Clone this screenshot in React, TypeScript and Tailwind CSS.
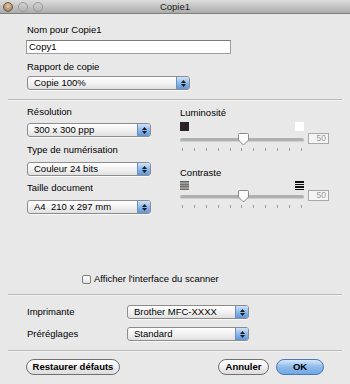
import React from 'react';

const font = { fontFamily: '"Liberation Sans", Arial, sans-serif' };

function Select({ value, width }: { value: string; width: string }) {
  return (
    <div className={`${width} h-[14px] flex items-stretch rounded-[3px] border border-[#8c8c8c] bg-gradient-to-b from-[#ffffff] via-[#f2f2f2] to-[#e0e0e0] shadow-[0_1px_0_#f8f8f8] overflow-hidden`}>
      <div className="flex-1 pl-[6px] text-[9.5px] leading-[12px] text-black whitespace-pre">{value}</div>
      <div className="w-[13px] flex flex-col items-center justify-center gap-[1px] border-l border-[#6d8fbd] bg-gradient-to-b from-[#cfe3fa] via-[#8fb9ec] to-[#5d95da]">
        <svg width="5" height="3" viewBox="0 0 5 3"><path d="M0 3 L2.5 0 L5 3 Z" fill="#1a1a1a" /></svg>
        <svg width="5" height="3" viewBox="0 0 5 3"><path d="M0 0 L2.5 3 L5 0 Z" fill="#1a1a1a" /></svg>
      </div>
    </div>
  );
}

function Slider() {
  return (
    <div className="flex items-center gap-[4px]">
      <div className="relative w-[124px] h-[18px] shrink-0">
        <div className="absolute left-0 right-0 top-[5px] h-[4px] rounded-full bg-[#b0b0b0] border-b border-[#cfcfcf]" />
        <svg className="absolute left-[57px] top-0" width="13" height="13" viewBox="0 0 13 13">
          <path d="M1.5 1.5 Q1.5 0.5 2.5 0.5 L10.5 0.5 Q11.5 0.5 11.5 1.5 L11.5 7 L6.5 12 L1.5 7 Z" fill="#fbfbfb" stroke="#8a8a8a" strokeWidth="1" />
        </svg>
        <div className="absolute left-0 right-0 top-[15px] flex justify-between px-[2px]">
          {[0, 1, 2, 3, 4, 5, 6, 7, 8, 9, 10].map((i) => (
            <div key={i} className="w-px h-[3px] bg-[#9a9a9a]" />
          ))}
        </div>
      </div>
      <div className="w-[21px] h-[11px] mb-[7px] shrink-0 border border-[#a8a8a8] bg-[#f4f4f4] text-right pr-[2px] text-[8.5px] leading-[9px] text-[#9a9a9a]">50</div>
    </div>
  );
}

function Button({ label, width, primary }: { label: string; width: string; primary?: boolean }) {
  return (
    <div
      className={`${width} h-[16px] rounded-full border flex items-center justify-center text-[9.5px] font-bold ${
        primary
          ? 'border-[#4a78b4] bg-gradient-to-b from-[#d6e8fb] via-[#8ebae9] to-[#6ea7e6] text-black'
          : 'border-[#707070] bg-gradient-to-b from-[#ffffff] via-[#f0f0f0] to-[#dcdcdc] text-black'
      }`}
    >
      {label}
    </div>
  );
}

export default function App() {
  return (
    <div className="w-[350px] h-[384px] bg-[#e8e8e8] overflow-hidden text-black" style={font}>
      {/* Title bar */}
      <div className="h-[14px] relative flex items-center justify-center bg-gradient-to-b from-[#dcdcdc] to-[#ababab] border-b border-[#7d7d7d]">
        <div className="absolute left-[3px] top-[2px] flex gap-[5px]">
          <div className="w-[10px] h-[10px] rounded-full bg-[radial-gradient(circle_at_50%_35%,#e6c9a8,#8d6b4d)] border border-[#6f5a48]" />
          <div className="w-[10px] h-[10px] rounded-full bg-gradient-to-b from-[#cfcfcf] to-[#b5b5b5] border border-[#9a9a9a]" />
          <div className="w-[10px] h-[10px] rounded-full bg-gradient-to-b from-[#cfcfcf] to-[#b5b5b5] border border-[#9a9a9a]" />
        </div>
        <span className="text-[9.5px] leading-[12px] text-[#222]">Copie1</span>
      </div>

      {/* Top block */}
      <div className="px-[27px]">
        <div className="mt-[10px] text-[9.5px] leading-[12px]">Nom pour Copie1</div>
        <div className="mt-[4px] w-[205px] h-[14px] -ml-[1px] border border-[#9d9d9d] border-t-[#7a7a7a] bg-white pl-[2px] text-[9.5px] leading-[12px]">Copy1</div>
        <div className="mt-[7px] text-[9.5px] leading-[12px]">Rapport de copie</div>
        <div className="mt-[3px]">
          <Select value="Copie 100%" width="w-[163px]" />
        </div>
      </div>

      <div className="mx-[8px] mt-[9px] h-px bg-[#b9b9b9] border-b border-[#f4f4f4] box-content" />

      {/* Two columns */}
      <div className="flex pl-[27px]">
        <div className="w-[153px] shrink-0">
          <div className="mt-[5px] text-[9.5px] leading-[12px]">Résolution</div>
          <div className="mt-[5px]"><Select value="300 x 300 ppp" width="w-[124px]" /></div>
          <div className="mt-[7px] text-[9.5px] leading-[12px]">Type de numérisation</div>
          <div className="mt-[6px]"><Select value="Couleur 24 bits" width="w-[124px]" /></div>
          <div className="mt-[6px] text-[9.5px] leading-[12px]">Taille document</div>
          <div className="mt-[6px]"><Select value="A4  210 x 297 mm" width="w-[124px]" /></div>
        </div>
        <div className="shrink-0">
          <div className="mt-[6px] text-[9.5px] leading-[12px]">Luminosité</div>
          <div className="mt-[3px] w-[124px] flex justify-between">
            <div className="w-[9px] h-[9px] bg-[#2a2328]" />
            <div className="w-[9px] h-[9px] bg-white" />
          </div>
          <div className="mt-[2px]"><Slider /></div>
          <div className="mt-[16px] text-[9.5px] leading-[12px]">Contraste</div>
          <div className="mt-[2px] w-[124px] flex justify-between">
            <div className="w-[9px] h-[9px] flex flex-col justify-between bg-[#9a9a9a]">
              <div className="h-[1px] bg-[#5e5e5e]" />
              <div className="h-[1px] bg-[#6e6e6e]" />
              <div className="h-[1px] bg-[#6e6e6e]" />
              <div className="h-[1px] bg-[#7a6a5a]" />
            </div>
            <div className="w-[9px] h-[9px] flex flex-col justify-between">
              <div className="h-[1.5px] bg-[#111]" />
              <div className="h-[1.5px] bg-[#111]" />
              <div className="h-[1.5px] bg-[#111]" />
              <div className="h-[1.5px] bg-[#111]" />
            </div>
          </div>
          <div className="mt-[0px]"><Slider /></div>
        </div>
      </div>

      {/* Checkbox */}
      <div className="mt-[59px] flex items-center pl-[82px] gap-[3px]">
        <div className="w-[9px] h-[9px] rounded-[2px] border border-[#7d7d7d] bg-gradient-to-b from-white to-[#e4e4e4]" />
        <span className="text-[9.5px] leading-[12px]">Afficher l'interface du scanner</span>
      </div>

      <div className="mx-[8px] mt-[9px] h-px bg-[#b9b9b9] border-b border-[#f4f4f4] box-content" />

      {/* Printer */}
      <div className="px-[27px]">
        <div className="mt-[9px] flex items-center">
          <div className="w-[100px] text-[9.5px] leading-[12px]">Imprimante</div>
          <Select value="Brother MFC-XXXX" width="w-[122px]" />
        </div>
        <div className="mt-[8px] flex items-center">
          <div className="w-[100px] text-[9.5px] leading-[12px]">Préréglages</div>
          <Select value="Standard" width="w-[122px]" />
        </div>
      </div>

      <div className="mx-[8px] mt-[9px] h-px bg-[#b9b9b9] border-b border-[#f4f4f4] box-content" />

      {/* Buttons */}
      <div className="mt-[7px] flex items-center px-[26px]">
        <Button label="Restaurer défauts" width="w-[94px]" />
        <div className="flex-1" />
        <Button label="Annuler" width="w-[51px]" />
        <div className="w-[7px]" />
        <Button label="OK" width="w-[48px]" primary />
      </div>
    </div>
  );
}
